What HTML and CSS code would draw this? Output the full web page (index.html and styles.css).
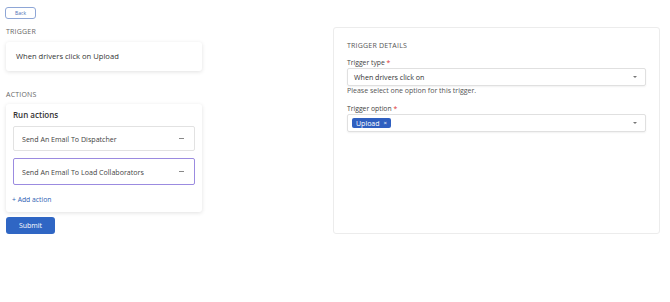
FILE: index.html
```html
<!DOCTYPE html>
<html lang="en">
<head>
    <meta charset="UTF-8">
    <meta name="viewport" content="width=device-width, initial-scale=1.0">
    <title>Workflow</title>
    <link rel="stylesheet" href="styles.css">
</head>
<body>
    <div class="page">
        <button class="back-btn">Back</button>

        <div class="layout">
            <div class="left-col">
                <div class="section-label">TRIGGER</div>
                <div class="card trigger-card">When drivers click on Upload</div>

                <div class="section-label actions-label">ACTIONS</div>
                <div class="card actions-card">
                    <div class="actions-title">Run actions</div>
                    <div class="action-item">
                        <span>Send An Email To Dispatcher</span>
                        <span class="dash"></span>
                    </div>
                    <div class="action-item active">
                        <span>Send An Email To Load Collaborators</span>
                        <span class="dash"></span>
                    </div>
                    <a class="add-action" href="#">+ Add action</a>
                </div>

                <button class="submit-btn">Submit</button>
            </div>

            <div class="panel">
                <div class="panel-title">TRIGGER DETAILS</div>

                <label class="field-label">Trigger type <span class="req">*</span></label>
                <div class="select">
                    <span>When drivers click on</span>
                    <span class="caret"></span>
                </div>
                <div class="help">Please select one option for this trigger.</div>

                <label class="field-label option-label">Trigger option <span class="req">*</span></label>
                <div class="select">
                    <span class="chip">Upload <span class="chip-x">×</span></span>
                    <span class="caret"></span>
                </div>
            </div>
        </div>
    </div>
</body>
</html>
```

FILE: styles.css
```css
body {
    margin: 0;
    font-family: "Open Sans", Arial, sans-serif;
    color: #333;
    background: #fff;
}

.page {
    padding: 7px 6px 0 6px;
}

.back-btn {
    display: block;
    width: 31px;
    height: 12px;
    padding: 0;
    font-family: inherit;
    font-size: 5px;
    color: #4a6fb5;
    background: #fff;
    border: 1px solid #8ea6d6;
    border-radius: 3px;
    margin-left: -1px;
}

.layout {
    display: grid;
    grid-template-columns: 327px 327px;
    margin-top: 8px;
}

.section-label {
    font-size: 7px;
    color: #666;
    letter-spacing: 0.2px;
    height: 10px;
    line-height: 10px;
}

.card {
    width: 196px;
    box-sizing: border-box;
    background: #fff;
    border-radius: 3px;
    box-shadow: 0 1px 4px rgba(0, 0, 0, 0.12);
}

.trigger-card {
    margin-top: 5px;
    height: 29px;
    padding: 0 10px;
    line-height: 29px;
    font-size: 7.6px;
    color: #333;
}

.actions-label {
    margin-top: 19px;
}

.actions-card {
    margin-top: 4px;
    padding: 5px 7px 7px 7px;
}

.actions-title {
    font-size: 8px;
    font-weight: 600;
    color: #333;
    height: 12px;
    line-height: 12px;
    margin-bottom: 5px;
}

.action-item {
    display: flex;
    justify-content: space-between;
    align-items: center;
    height: 25px;
    box-sizing: border-box;
    padding: 0 8px;
    border: 1px solid #e2e2e2;
    border-radius: 2px;
    font-size: 7.1px;
    color: #444;
    margin-bottom: 7px;
}

.action-item.active {
    height: 27px;
    border: 1px solid #9b8be0;
    margin-bottom: 10px;
}

.dash {
    width: 5px;
    height: 1px;
    background: #888;
    margin-right: 2px;
}

.add-action {
    display: block;
    font-size: 6.8px;
    line-height: 10px;
    color: #2f5fb3;
    text-decoration: none;
    margin-left: -1px;
}

.submit-btn {
    display: block;
    margin-top: 5px;
    width: 49px;
    height: 17px;
    padding: 0;
    font-family: inherit;
    font-size: 7px;
    color: #fff;
    background: #2f66c4;
    border: none;
    border-radius: 3px;
}

.panel {
    height: 207px;
    box-sizing: border-box;
    border: 1px solid #ececec;
    border-radius: 3px;
    padding: 13px 13px 0 13px;
}

.panel-title {
    font-size: 7px;
    color: #555;
    letter-spacing: 0.2px;
    height: 10px;
    line-height: 10px;
}

.field-label {
    display: block;
    font-size: 6.8px;
    color: #444;
    margin-top: 7px;
    height: 9px;
    line-height: 9px;
}

.req {
    color: #d33;
}

.select {
    display: flex;
    justify-content: space-between;
    align-items: center;
    height: 18px;
    box-sizing: border-box;
    margin-top: 1px;
    padding: 0 8px 0 6px;
    border: 1px solid #e0e0e0;
    border-radius: 2px;
    box-shadow: 0 1px 2px rgba(0, 0, 0, 0.06);
    font-size: 7.1px;
    color: #333;
}

.caret {
    width: 0;
    height: 0;
    border-left: 2px solid transparent;
    border-right: 2px solid transparent;
    border-top: 2px solid #777;
}

.help {
    font-size: 7px;
    color: #555;
    height: 10px;
    line-height: 10px;
}

.option-label {
    margin-top: 8px;
}

.chip {
    display: inline-flex;
    align-items: center;
    height: 10px;
    padding: 0 4px 0 4px;
    margin-left: -2px;
    background: #2f5fc0;
    color: #fff;
    border-radius: 2px;
    font-size: 7px;
}

.chip-x {
    margin-left: 4px;
    font-size: 6px;
}
```
